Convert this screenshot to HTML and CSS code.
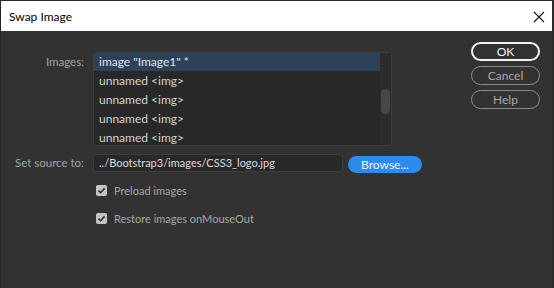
FILE: index.html
```html
<!DOCTYPE html>
<html>
<head>
<meta charset="utf-8">
<link rel="stylesheet" href="styles.css">
</head>
<body>
<div class="dialog">
  <div class="titlebar">
    <span class="title">Swap Image</span>
    <svg class="close" width="12" height="12" viewBox="0 0 12 12"><path d="M1 1L11 11M11 1L1 11" stroke="#111" stroke-width="1.1" fill="none"/></svg>
  </div>
  <div class="main">
    <div class="form">
      <div class="label label-images">Images:</div>
      <div class="listbox">
        <div class="items">
          <div class="item selected">image "Image1" *</div>
          <div class="item">unnamed &lt;img&gt;</div>
          <div class="item">unnamed &lt;img&gt;</div>
          <div class="item">unnamed &lt;img&gt;</div>
          <div class="item">unnamed &lt;img&gt;</div>
        </div>
        <div class="track"><div class="thumb"></div></div>
      </div>
      <div class="label label-source">Set source to:</div>
      <div class="source-row">
        <div class="input">../Bootstrap3/images/CSS3_logo.jpg</div>
        <div class="browse">Browse...</div>
      </div>
      <div class="check-row check-first">
        <svg class="check" width="11" height="11" viewBox="0 0 11 11"><rect width="11" height="11" rx="2" fill="#c4c4c4"/><path d="M2.5 5.6L4.6 7.7L8.6 3.4" stroke="#2e2e2e" stroke-width="1.6" fill="none"/></svg>
        <span>Preload images</span>
      </div>
      <div class="check-row check-second">
        <svg class="check" width="11" height="11" viewBox="0 0 11 11"><rect width="11" height="11" rx="2" fill="#c4c4c4"/><path d="M2.5 5.6L4.6 7.7L8.6 3.4" stroke="#2e2e2e" stroke-width="1.6" fill="none"/></svg>
        <span>Restore images onMouseOut</span>
      </div>
    </div>
    <div class="buttons">
      <div class="btn btn-ok">OK</div>
      <div class="btn">Cancel</div>
      <div class="btn">Help</div>
    </div>
  </div>
</div>
</body>
</html>
```
FILE: styles.css
```css
html, body {
  margin: 0;
  padding: 0;
  background: #2a2a2a;
}
.dialog {
  width: 551px;
  height: 287px;
  border-top: 1px solid #2b2b2b;
  border-left: 1px solid #262626;
  border-right: 2px solid #2b2b2b;
  background: #323232;
  font-family: "Lato", sans-serif;
  font-size: 12px;
  overflow: hidden;
}
.titlebar {
  height: 30px;
  background: #ffffff;
  display: flex;
  align-items: center;
  justify-content: space-between;
  padding: 0 7px 0 8px;
}
.title {
  font-family: "Lato", sans-serif;
  font-size: 12px;
  color: #000;
}
.close {
  margin-top: 1px;
}
.main {
  display: flex;
}
.form {
  display: grid;
  grid-template-columns: 83px auto;
  column-gap: 9px;
  align-items: start;
  padding-top: 21px;
}
.label {
  text-align: right;
  color: #a3a3a3;
  line-height: 18px;
  font-size: 11.5px;
}
.label-images {
  margin-top: 1px;
}
.listbox {
  width: 297px;
  height: 92px;
  border: 1px solid #3d3d3d;
  border-radius: 3px;
  background: #282828;
  display: flex;
  overflow: hidden;
}
.items {
  width: 286px;
}
.item {
  height: 19px;
  line-height: 19px;
  padding-left: 5px;
  color: #d2d2d2;
}
.item.selected {
  height: 18px;
  line-height: 18px;
  background: #2d4259;
  color: #e4e4e4;
}
.track {
  width: 11px;
  background: #2c2c2c;
  position: relative;
}
.thumb {
  position: absolute;
  left: 1px;
  top: 36px;
  width: 9px;
  height: 25px;
  border-radius: 5px;
  background: #474747;
}
.label-source {
  margin-top: 8px;
}
.source-row {
  margin-top: 8px;
  display: flex;
  align-items: flex-start;
}
.input {
  width: 243px;
  height: 16px;
  line-height: 16px;
  padding-left: 5px;
  border: 1px solid #3d3d3d;
  border-radius: 3px;
  background: #282828;
  color: #dcdcdc;
  white-space: nowrap;
  font-size: 11px;
}
.browse {
  margin-left: 5px;
  margin-top: 2px;
  width: 74px;
  height: 17px;
  line-height: 17px;
  border-radius: 9px;
  background: #2d8ceb;
  color: #f2f2f2;
  text-align: center;
}
.check-row {
  grid-column: 2;
  display: flex;
  align-items: center;
  gap: 7px;
  color: #a6a6a6;
  padding-left: 3px;
  height: 16px;
  font-size: 11px;
}
.check-first {
  margin-top: 9px;
}
.check-second {
  margin-top: 12px;
}
.buttons {
  margin-left: auto;
  margin-right: 12px;
  padding-top: 11px;
  display: flex;
  flex-direction: column;
  gap: 5px;
}
.btn {
  width: 67px;
  height: 17px;
  line-height: 17px;
  border: 1px solid #8a8a8a;
  border-radius: 10px;
  color: #a8a8a8;
  text-align: center;
}
.btn-ok {
  width: 65px;
  height: 15px;
  line-height: 15px;
  border: 2px solid #f2f2f2;
  color: #f2f2f2;
}
```
